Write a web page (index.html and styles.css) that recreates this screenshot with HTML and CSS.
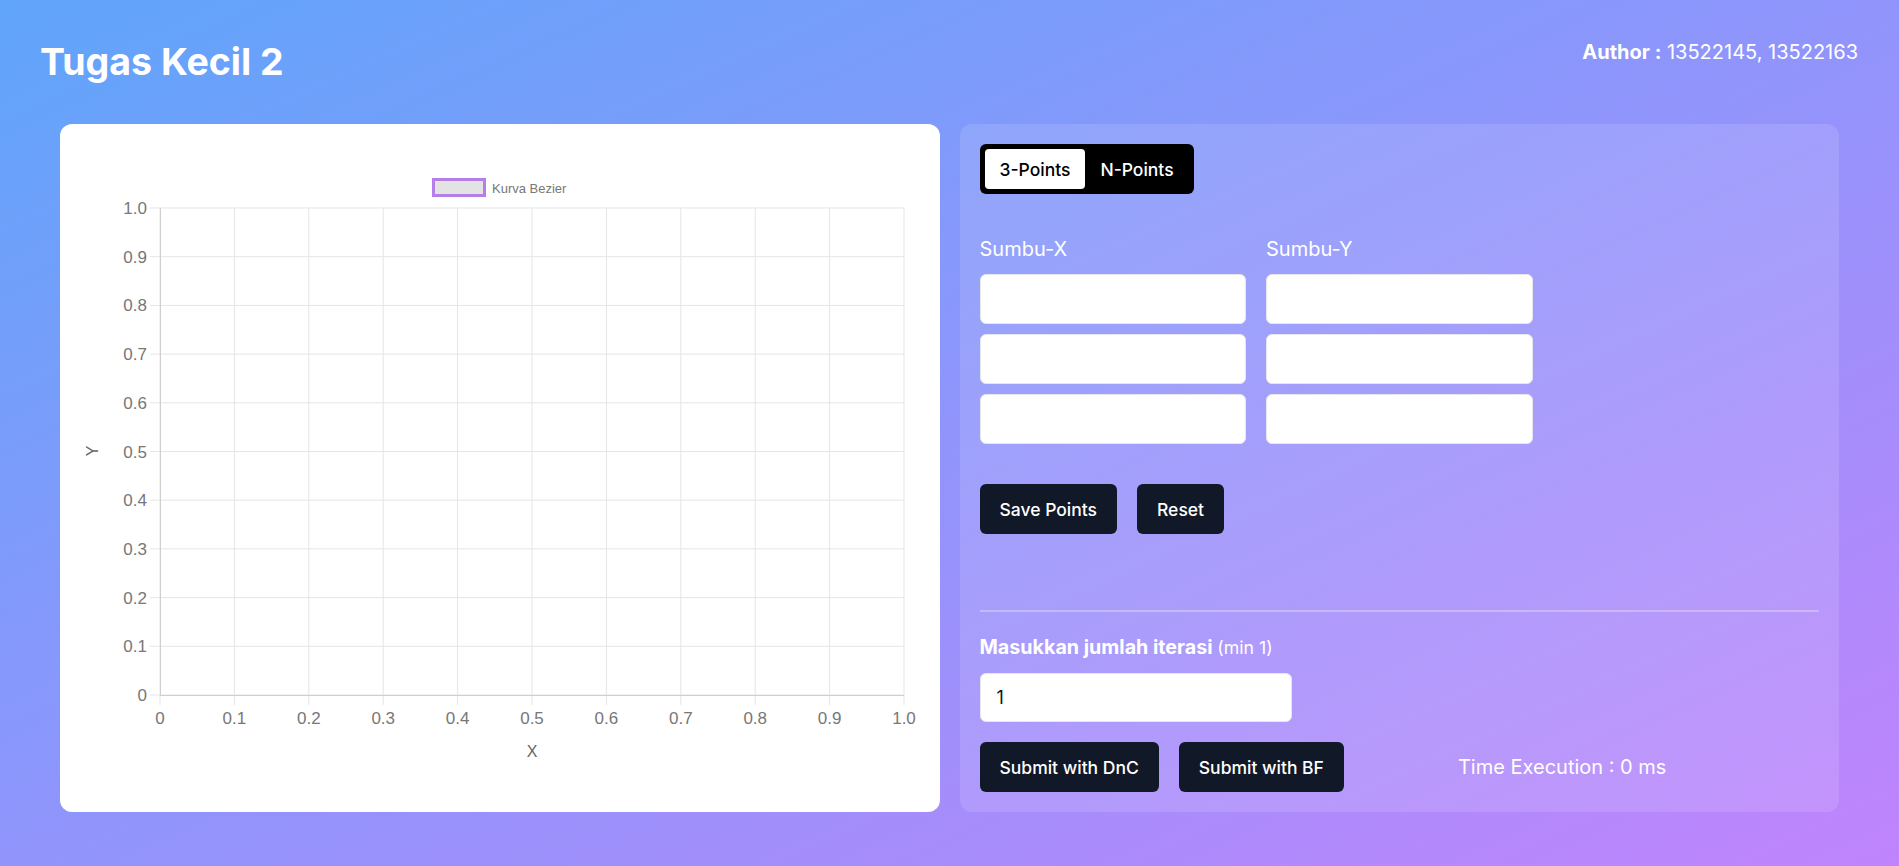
FILE: index.html
```html
<!DOCTYPE html>
<html lang="id">
<head>
<meta charset="utf-8">
<title>Tugas Kecil 2</title>
<link rel="stylesheet" href="styles.css">
</head>
<body>
<header class="header">
  <h1 class="title">Tugas Kecil 2</h1>
  <div class="author"><b>Author :</b> 13522145, 13522163</div>
</header>
<main class="main">
  <section class="chart-card">
    <svg class="chart" viewBox="0 0 880 688" width="880" height="688">
      <g class="grid">
        <line x1="100" y1="84" x2="100" y2="581"/>
        <line x1="174.4" y1="84" x2="174.4" y2="581"/>
        <line x1="248.8" y1="84" x2="248.8" y2="581"/>
        <line x1="323.2" y1="84" x2="323.2" y2="581"/>
        <line x1="397.6" y1="84" x2="397.6" y2="581"/>
        <line x1="472" y1="84" x2="472" y2="581"/>
        <line x1="546.4" y1="84" x2="546.4" y2="581"/>
        <line x1="620.8" y1="84" x2="620.8" y2="581"/>
        <line x1="695.2" y1="84" x2="695.2" y2="581"/>
        <line x1="769.6" y1="84" x2="769.6" y2="581"/>
        <line x1="844" y1="84" x2="844" y2="581"/>
        <line x1="90" y1="84" x2="844" y2="84"/>
        <line x1="90" y1="132.7" x2="844" y2="132.7"/>
        <line x1="90" y1="181.4" x2="844" y2="181.4"/>
        <line x1="90" y1="230.1" x2="844" y2="230.1"/>
        <line x1="90" y1="278.8" x2="844" y2="278.8"/>
        <line x1="90" y1="327.5" x2="844" y2="327.5"/>
        <line x1="90" y1="376.2" x2="844" y2="376.2"/>
        <line x1="90" y1="424.9" x2="844" y2="424.9"/>
        <line x1="90" y1="473.6" x2="844" y2="473.6"/>
        <line x1="90" y1="522.3" x2="844" y2="522.3"/>
        <line x1="90" y1="571" x2="844" y2="571"/>
      </g>
      <g class="axis">
        <line x1="100.5" y1="84" x2="100.5" y2="571"/>
        <line x1="100" y1="571.5" x2="844" y2="571.5"/>
      </g>
      <g class="ylabels">
        <text x="87" y="90">1.0</text>
        <text x="87" y="138.7">0.9</text>
        <text x="87" y="187.4">0.8</text>
        <text x="87" y="236.1">0.7</text>
        <text x="87" y="284.8">0.6</text>
        <text x="87" y="333.5">0.5</text>
        <text x="87" y="382.2">0.4</text>
        <text x="87" y="430.9">0.3</text>
        <text x="87" y="479.6">0.2</text>
        <text x="87" y="528.3">0.1</text>
        <text x="87" y="577">0</text>
      </g>
      <g class="xlabels">
        <text x="100" y="600">0</text>
        <text x="174.4" y="600">0.1</text>
        <text x="248.8" y="600">0.2</text>
        <text x="323.2" y="600">0.3</text>
        <text x="397.6" y="600">0.4</text>
        <text x="472" y="600">0.5</text>
        <text x="546.4" y="600">0.6</text>
        <text x="620.8" y="600">0.7</text>
        <text x="695.2" y="600">0.8</text>
        <text x="769.6" y="600">0.9</text>
        <text x="844" y="600">1.0</text>
      </g>
      <text class="axis-title" x="472" y="633">X</text>
      <text class="axis-title" x="0" y="0" transform="translate(38 327) rotate(-90)">Y</text>
      <rect class="legend-box" x="373.5" y="55.5" width="51" height="16"/>
      <text class="legend-text" x="432" y="68.5">Kurva Bezier</text>
    </svg>
  </section>

  <section class="panel">
    <div class="toggle">
      <button class="toggle-btn active">3-Points</button>
      <button class="toggle-btn">N-Points</button>
    </div>

    <div class="points">
      <div class="col">
        <label class="col-label">Sumbu-X</label>
        <input class="field" type="text">
        <input class="field" type="text">
        <input class="field" type="text">
      </div>
      <div class="col">
        <label class="col-label">Sumbu-Y</label>
        <input class="field" type="text">
        <input class="field" type="text">
        <input class="field" type="text">
      </div>
    </div>

    <div class="actions">
      <button class="btn">Save Points</button>
      <button class="btn">Reset</button>
    </div>

    <div class="divider"></div>

    <label class="iter-label">Masukkan jumlah iterasi <span class="iter-hint">(min 1)</span></label>
    <input class="field iter-field" type="text" value="1">

    <div class="actions submit-row">
      <button class="btn">Submit with DnC</button>
      <button class="btn">Submit with BF</button>
      <span class="time">Time Execution : 0 ms</span>
    </div>
  </section>
</main>
</body>
</html>
```

FILE: styles.css
```css
* {
  box-sizing: border-box;
}

html, body {
  margin: 0;
  padding: 0;
}

body {
  min-height: 100vh;
  font-family: Inter, "Noto Sans", sans-serif;
  color: #fff;
  background: linear-gradient(to bottom right, #60a5fa, #c084fc);
}

.header {
  display: flex;
  justify-content: space-between;
  align-items: flex-start;
  padding: 38px 41px 0 40px;
}

.title {
  margin: 4px 0 0;
  font-size: 37.5px;
  line-height: 40px;
  font-weight: 700;
}

.author {
  font-size: 20px;
  line-height: 28px;
  font-weight: 400;
}

.author b {
  font-weight: 700;
}

.main {
  display: grid;
  grid-template-columns: 1fr 1fr;
  gap: 20px;
  padding: 42px 60px 0;
}

.chart-card {
  background: #fff;
  border-radius: 12px;
  height: 688px;
  overflow: hidden;
}

.chart {
  display: block;
  width: 880px;
  height: 688px;
}

.grid line {
  stroke: #e5e5e5;
  stroke-width: 1;
}

.axis line {
  stroke: #cfcfcf;
  stroke-width: 1;
}

.ylabels text,
.xlabels text {
  font-family: "Liberation Sans", Arial, sans-serif;
  font-size: 17px;
  fill: #777;
}

.ylabels text {
  text-anchor: end;
}

.xlabels text {
  text-anchor: middle;
}

.axis-title {
  font-family: "Liberation Sans", Arial, sans-serif;
  font-size: 16px;
  fill: #666;
  text-anchor: middle;
}

.legend-box {
  fill: #e3e3e3;
  stroke: #b57ee8;
  stroke-width: 3;
}

.legend-text {
  font-family: "Liberation Sans", Arial, sans-serif;
  font-size: 13px;
  fill: #777;
}

.panel {
  display: flex;
  flex-direction: column;
  align-items: flex-start;
  padding: 20px;
  border-radius: 12px;
  background: rgba(255, 255, 255, 0.12);
  height: 688px;
}

.toggle {
  display: inline-flex;
  padding: 5px;
  background: #000;
  border-radius: 6px;
}

.toggle-btn {
  height: 40px;
  padding: 0 15px;
  border: 0;
  border-radius: 4px;
  background: transparent;
  color: #fff;
  font-family: Inter, sans-serif;
  font-size: 17.5px;
  font-weight: 500;
}

.toggle-btn.active {
  background: #fff;
  color: #000;
}

.points {
  display: grid;
  grid-template-columns: repeat(3, 1fr);
  column-gap: 20px;
  width: 100%;
  margin-top: 41px;
}

.col {
  display: flex;
  flex-direction: column;
  gap: 10px;
}

.col-label {
  font-size: 20px;
  line-height: 28px;
  margin-bottom: 1px;
}

.field {
  display: block;
  width: 100%;
  height: 50px;
  padding: 0 16px;
  border: 1px solid #e5e7eb;
  border-radius: 6px;
  background: #fff;
  font-family: Inter, sans-serif;
  font-size: 18px;
  color: #111;
}

.actions {
  display: flex;
  align-items: center;
  gap: 20px;
  margin-top: 40px;
}

.btn {
  height: 50px;
  padding: 0 20px;
  border: 0;
  border-radius: 6px;
  background: #111827;
  color: #fff;
  font-family: Inter, sans-serif;
  font-size: 17.5px;
  font-weight: 500;
}

.divider {
  width: 100%;
  height: 2px;
  margin-top: 76px;
  background: rgba(255, 255, 255, 0.3);
}

.iter-label {
  margin-top: 20.7px;
  font-size: 19.7px;
  line-height: 28px;
  font-weight: 700;
}

.iter-hint {
  font-size: 17.7px;
  font-weight: 400;
}

.iter-field {
  width: 312px;
  margin-top: 11.3px;
}

.submit-row {
  margin-top: 20px;
}

.time {
  margin-left: 94px;
  font-size: 20px;
  line-height: 28px;
}
```
